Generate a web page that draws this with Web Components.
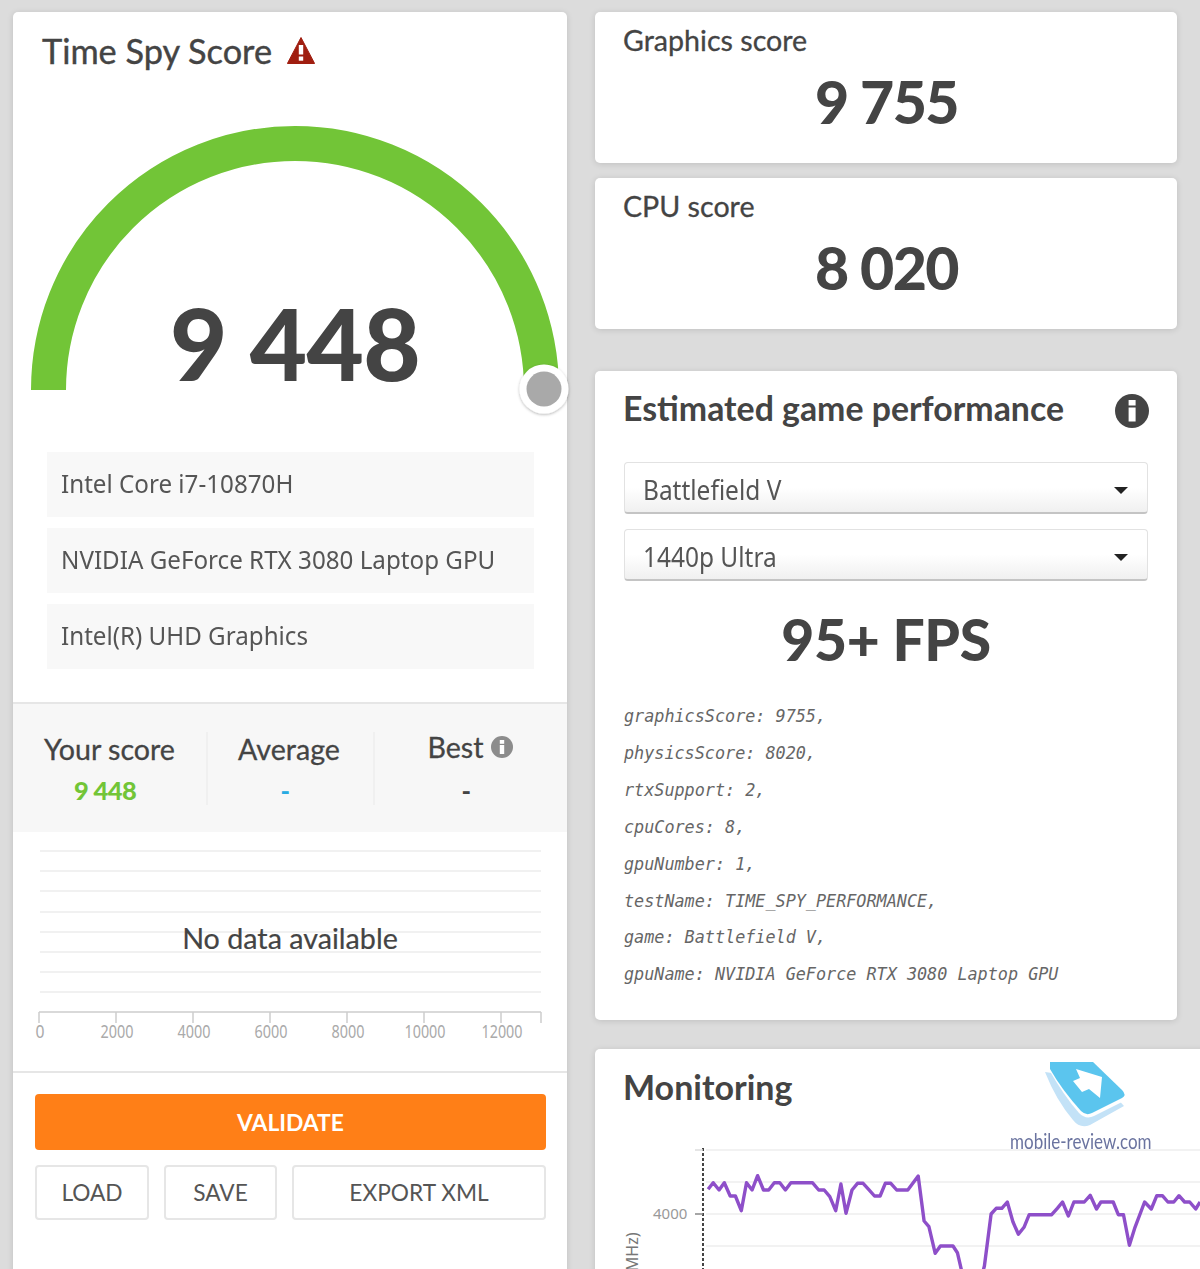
<!DOCTYPE html>
<html lang="en">
<head>
<meta charset="utf-8">
<title>Time Spy Score</title>
<style>
    html, body { margin: 0; height: 1269px; overflow: hidden; }
    body {
        background: #dcdcdc;
        font-family: Lato, "Noto Sans", sans-serif;
        color: #444;
    }
    dash-board { display: grid; }
</style>
</head>
<body>
<dash-board>
    <score-panel slot="left"></score-panel>
    <score-card slot="right" label="Graphics score" value="9 755"></score-card>
    <score-card slot="right" label="CPU score" value="8 020" style="margin-top:15px"></score-card>
    <estimate-card slot="right" style="margin-top:42px"></estimate-card>
    <monitoring-card slot="right" style="margin-top:29px"></monitoring-card>
</dash-board>

<script>
const CARD = `
    background: #fff;
    border-radius: 5px;
    box-shadow: 0 1px 6px rgba(0,0,0,0.13);
`;

class DashBoard extends HTMLElement {
    constructor() {
        super();
        this.attachShadow({ mode: "open" });
        this.shadowRoot.innerHTML = `
            <style>
                :host {
                    display: grid;
                    grid-template-columns: 554px 582px;
                    column-gap: 28px;
                    padding: 12px 0 0 13px;
                }
                .col { display: flex; flex-direction: column; min-width: 0; }
            </style>
            <div class="col"><slot name="left"></slot></div>
            <div class="col"><slot name="right"></slot></div>
        `;
    }
}

class GaugeDial extends HTMLElement {
    constructor() {
        super();
        this.attachShadow({ mode: "open" });
        this.shadowRoot.innerHTML = `
            <style>
                :host { display: block; position: relative; height: 362px; }
                svg { display: block; overflow: visible; }
                .value {
                    position: absolute;
                    left: 157px;
                    top: 193px;
                    font: 900 99px/120px Lato, sans-serif;
                    letter-spacing: -0.6px;
                    color: #444;
                    white-space: nowrap;
                }
            </style>
            <svg width="554" height="362" viewBox="0 0 554 362">
                <defs>
                    <filter id="s" x="-30%" y="-30%" width="160%" height="160%">
                        <feDropShadow dx="0" dy="1" stdDeviation="1.5" flood-color="#000" flood-opacity="0.3"/>
                    </filter>
                </defs>
                <path d="M35.5 300 A246.5 246.5 0 0 1 528.5 300" fill="none" stroke="#72c537" stroke-width="35"/>
                <circle cx="531" cy="299" r="24.5" fill="#fff" filter="url(#s)"/>
                <circle cx="531" cy="299" r="17.5" fill="#a9a9a9"/>
            </svg>
            <div class="value">${this.getAttribute("value")}</div>
        `;
    }
}

class SpecRow extends HTMLElement {
    constructor() {
        super();
        this.attachShadow({ mode: "open" });
        this.shadowRoot.innerHTML = `
            <style>
                :host {
                    display: flex;
                    align-items: center;
                    height: 65px;
                    margin-bottom: 11px;
                    padding: 0 14px 0 13.5px;
                    background: #f8f8f8;
                    font: 400 26px "Noto Sans", sans-serif;
                    color: #555;
                    white-space: nowrap;
                }
                span { display: inline-block; transform-origin: 0 50%; transform: scaleX(0.93); margin-top: -4px; }
            </style>
            <span><slot></slot></span>
        `;
    }
}

class StatCell extends HTMLElement {
    constructor() {
        super();
        this.attachShadow({ mode: "open" });
        this.shadowRoot.innerHTML = `
            <style>
                :host {
                    display: block;
                    height: 73px;
                    margin-left: -1px;
                    text-align: center;
                    border-left: 2px solid #f0f0f0;
                }
                :host([first]) { border-left: 0; margin-left: 0; }
                .label {
                    font: 400 28.6px/34px Lato, sans-serif;
                    -webkit-text-stroke: 0.3px #444;
                    color: #444;
                    height: 34px;
                    white-space: nowrap;
                    transform: translateX(var(--label-nudge, 0));
                }
                .value {
                    font: 900 25.5px/34px Lato, sans-serif;
                    letter-spacing: -0.6px;
                    margin-top: 7px;
                    color: var(--tone, #444);
                    transform: translateX(var(--nudge, 0));
                }
            </style>
            <div class="label"><slot></slot></div>
            <div class="value">${this.getAttribute("value")}</div>
        `;
    }
}

class DistChart extends HTMLElement {
    constructor() {
        super();
        this.attachShadow({ mode: "open" });
        const lines = [19, 39, 59, 80, 100, 120, 140, 160]
            .map(y => `<line x1="27" x2="528" y1="${y}" y2="${y}" stroke="#f1f1f1" stroke-width="2"/>`).join("");
        const ticks = [[26, "0", 9], [103, "2000", 33], [180, "4000", 33], [257, "6000", 33], [334, "8000", 33], [411, "10000", 41], [488, "12000", 41]];
        const marks = ticks.map(([x, t, w]) => `
            <line x1="${x}" x2="${x}" y1="180" y2="191" stroke="#ccc" stroke-width="1.5"/>
            <text x="${x + 1}" y="206" text-anchor="middle" textLength="${w}" lengthAdjust="spacingAndGlyphs">${t}</text>
        `).join("");
        this.shadowRoot.innerHTML = `
            <style>
                :host { display: block; position: relative; height: 239px; border-bottom: 2px solid #e6e6e6; }
                svg { display: block; }
                text { font: 400 18px "Noto Sans", sans-serif; fill: #aaa; }
                .empty {
                    position: absolute;
                    left: 0;
                    right: 0;
                    top: 87px;
                    text-align: center;
                    font: 400 28.7px/38px Lato, sans-serif;
                    -webkit-text-stroke: 0.2px #444;
                    color: #444;
                }
            </style>
            <svg width="554" height="239" viewBox="0 0 554 239">
                ${lines}
                <line x1="26" x2="528" y1="180" y2="180" stroke="#ccc" stroke-width="1.5"/>
                <line x1="528" x2="528" y1="180" y2="191" stroke="#ccc" stroke-width="1.5"/>
                ${marks}
            </svg>
            <div class="empty">No data available</div>
        `;
    }
}

class ActionButton extends HTMLElement {
    constructor() {
        super();
        this.attachShadow({ mode: "open" });
        this.shadowRoot.innerHTML = `
            <style>
                :host {
                    display: flex;
                    align-items: center;
                    justify-content: center;
                    height: 51px;
                    box-sizing: content-box;
                    border: 2px solid #e6e6e6;
                    border-radius: 4px;
                    background: #fff;
                    font: 400 22.7px Lato, sans-serif;
                    color: #555;
                    white-space: nowrap;
                }
                :host([primary]) {
                    height: 56px;
                    border: 0;
                    background: #ff7f17;
                    font-weight: 700;
                    font-size: 22.8px;
                    color: #fff;
                }
            </style>
            <slot></slot>
        `;
    }
}

class ScorePanel extends HTMLElement {
    constructor() {
        super();
        this.attachShadow({ mode: "open" });
        this.shadowRoot.innerHTML = `
            <style>
                :host { display: block; height: 1300px; ${CARD} }
                .head {
                    display: flex;
                    align-items: center;
                    gap: 15px;
                    height: 78px;
                    padding-left: 29px;
                    font: 400 34.3px Lato, sans-serif;
                    -webkit-text-stroke: 0.4px #444;
                    color: #444;
                }
                .head span { margin-top: -2px; }
                .head svg { margin-top: -1px; }
                .specs { padding: 0 33px 22px 34px; }
                .stats {
                    display: grid;
                    grid-template-columns: 194px 167px 193px;
                    height: 100px;
                    padding-top: 28px;
                    background: #f7f7f7;
                    border-top: 2px solid #e6e6e6;
                    box-sizing: content-box;
                }
                .best { display: inline-flex; align-items: center; gap: 7px; position: relative; top: -2px; }
                .actions { padding: 21px 21px 0 22px; }
                .row { display: grid; grid-template-columns: 114px 113px 254px; column-gap: 15px; margin-top: 15px; }
                action-button[primary] { width: 511px; }
            </style>
            <div class="head">
                <span>Time Spy Score</span>
                <svg width="28" height="27" viewBox="0 0 28 27">
                    <path d="M14 0.5 L27.6 26.5 L0.4 26.5 Z" fill="#a01e10" stroke="#a01e10" stroke-linejoin="round"/>
                    <rect x="11.8" y="8" width="4.4" height="9.5" fill="#fff"/>
                    <rect x="11.8" y="19.5" width="4.4" height="4.2" fill="#fff"/>
                </svg>
            </div>
            <gauge-dial value="9 448"></gauge-dial>
            <div class="specs">
                <spec-row>Intel Core i7-10870H</spec-row>
                <spec-row>NVIDIA GeForce RTX 3080 Laptop GPU</spec-row>
                <spec-row>Intel(R) UHD Graphics</spec-row>
            </div>
            <div class="stats">
                <stat-cell first value="9 448" style="--tone:#72c537;--nudge:-5px;--label-nudge:-0.5px">Your score</stat-cell>
                <stat-cell value="-" style="--tone:#29abe2;--nudge:-6px;--label-nudge:-2px">Average</stat-cell>
                <stat-cell value="-" style="--nudge:-5px;--label-nudge:-1px"><span class="best">Best
                    <svg width="22" height="22" viewBox="0 0 22 22">
                        <circle cx="11" cy="11" r="11" fill="#8c8c8c"/>
                        <rect x="8.8" y="9" width="4.4" height="9" fill="#fff"/>
                        <rect x="8.8" y="4" width="4.4" height="3.8" fill="#fff"/>
                    </svg></span></stat-cell>
            </div>
            <dist-chart></dist-chart>
            <div class="actions">
                <action-button primary>VALIDATE</action-button>
                <div class="row">
                    <action-button>LOAD</action-button>
                    <action-button>SAVE</action-button>
                    <action-button>EXPORT XML</action-button>
                </div>
            </div>
        `;
    }
}

class ScoreCard extends HTMLElement {
    constructor() {
        super();
        this.attachShadow({ mode: "open" });
        this.shadowRoot.innerHTML = `
            <style>
                :host { display: block; height: 151px; box-sizing: border-box; padding: 9px 28px 0 29px; ${CARD} }
                .label { font: 400 28.6px/38px Lato, sans-serif; -webkit-text-stroke: 0.3px #444; color: #444; margin-left: -1px; }
                .value { font: 900 59px/72px Lato, sans-serif; letter-spacing: -1.6px; color: #444; text-align: center; margin-top: 7px; }
            </style>
            <div class="label">${this.getAttribute("label")}</div>
            <div class="value">${this.getAttribute("value")}</div>
        `;
    }
}

class GameSelect extends HTMLElement {
    constructor() {
        super();
        this.attachShadow({ mode: "open" });
        this.shadowRoot.innerHTML = `
            <style>
                :host {
                    display: flex;
                    align-items: center;
                    justify-content: space-between;
                    height: 52px;
                    box-sizing: border-box;
                    margin-bottom: 15px;
                    padding: 0 19px 0 18px;
                    border: 1px solid #e2e2e2;
                    border-bottom: 2px solid #c4c4c4;
                    border-radius: 4px;
                    background: linear-gradient(#fff 50%, #f0f0f0);
                    font: 400 27px "Noto Sans", sans-serif;
                    color: #555;
                }
                span { display: inline-block; transform-origin: 0 50%; transform: scaleX(0.906); margin-top: 3px; }
                i { width: 0; height: 0; margin-top: 6px; border: 7px solid transparent; border-top-color: #222; border-bottom: 0; }
            </style>
            <span><slot></slot></span><i></i>
        `;
    }
}

class EstimateCard extends HTMLElement {
    constructor() {
        super();
        this.attachShadow({ mode: "open" });
        const params = [
            "graphicsScore: 9755,",
            "physicsScore: 8020,",
            "rtxSupport: 2,",
            "cpuCores: 8,",
            "gpuNumber: 1,",
            "testName: TIME_SPY_PERFORMANCE,",
            "game: Battlefield V,",
            "gpuName: NVIDIA GeForce RTX 3080 Laptop GPU"
        ].map(p => `<div>${p}</div>`).join("");
        this.shadowRoot.innerHTML = `
            <style>
                :host { display: block; height: 649px; box-sizing: border-box; padding: 0 29px; ${CARD} }
                .head {
                    display: flex;
                    align-items: center;
                    justify-content: space-between;
                    height: 80px;
                    margin-bottom: 11px;
                    font: 700 33.85px Lato, sans-serif;
                    color: #444;
                    white-space: nowrap;
                }
                .head span { margin-top: -6px; margin-left: -1px; }
                .head svg { margin: -1px -1px 0 0; }
                .fps { font: 900 57px/70px Lato, sans-serif; letter-spacing: -0.4px; color: #444; text-align: center; margin-top: 23px; }
                .params {
                    margin-top: 24px;
                    font: italic 400 16.8px/36.9px "DejaVu Sans Mono", monospace;
                    color: #666;
                    white-space: nowrap;
                }
            </style>
            <div class="head">
                <span>Estimated game performance</span>
                <svg width="34" height="34" viewBox="0 0 34 34">
                    <circle cx="17" cy="17" r="17" fill="#444"/>
                    <rect x="13.6" y="13.5" width="7" height="14" fill="#fff"/>
                    <rect x="13.6" y="6" width="7" height="5.5" fill="#fff"/>
                </svg>
            </div>
            <game-select>Battlefield V</game-select>
            <game-select>1440p Ultra</game-select>
            <div class="fps">95+ FPS</div>
            <div class="params">${params}</div>
        `;
    }
}

class ClockChart extends HTMLElement {
    constructor() {
        super();
        this.attachShadow({ mode: "open" });
        // points read off the reference, in a 2.7x / 3x zoomed frame
        const raw = "238,148 252,128 268,150 282,128 298,168 312,168 328,212 342,128 357,150 372,107 388,150 402,150 417,128 432,128 447,150 462,128 520,128 537,150 552,150 567,170 583,212 597,132 611,220 627,150 642,130 657,130 672,148 688,168 703,168 717,130 732,130 748,150 778,150 806,108 822,243 835,260 852,340 866,318 900,318 912,338 925,400 935,420 975,420 985,378 1003,222 1017,205 1032,205 1047,186 1062,245 1077,283 1092,262 1106,224 1167,224 1182,205 1196,186 1212,228 1227,186 1255,186 1271,166 1288,207 1300,186 1333,186 1347,224 1361,224 1377,316 1392,262 1418,186 1436,207 1451,167 1466,167 1481,186 1497,186 1511,167 1526,186 1540,186 1556,207 1568,186";
        const pts = raw.split(" ").map(p => {
            const [x, y] = p.split(",").map(Number);
            return `${(620 + x / 2.703 - 595).toFixed(1)},${(y / 3).toFixed(1)}`;
        }).join(" ");
        const grid = [10, 42, 74, 106]
            .map(y => `<line x1="111" x2="610" y1="${y}" y2="${y}" stroke="#f2f2f2" stroke-width="2"/>`).join("");
        this.shadowRoot.innerHTML = `
            <style>
                :host { display: block; height: 140px; }
                svg { display: block; }
                text { font: 400 15px "Noto Sans", sans-serif; fill: #999; }
                .axis { font-size: 16px; fill: #777; }
            </style>
            <svg width="605" height="140" viewBox="0 0 605 140">
                ${grid}
                <line x1="108" x2="108" y1="8" y2="140" stroke="#444" stroke-width="2" stroke-dasharray="3 2"/>
                <line x1="100" x2="108" y1="10" y2="10" stroke="#ddd" stroke-width="1.5"/>
                <line x1="100" x2="108" y1="74" y2="74" stroke="#888" stroke-width="1.5"/>
                <text x="58" y="79">4000</text>
                <text class="axis" transform="translate(43 136) rotate(-90)">(MHz)</text>
                <polyline points="${pts}" fill="none" stroke="#8e4fc9" stroke-width="3.4" stroke-linejoin="round"/>
            </svg>
        `;
    }
}

class MobileReviewMark extends HTMLElement {
    constructor() {
        super();
        this.attachShadow({ mode: "open" });
        this.shadowRoot.innerHTML = `
            <style>
                :host { display: block; position: absolute; left: 410px; top: 11px; width: 150px; height: 95px; }
                svg { position: absolute; left: 35px; top: 0; }
                .name {
                    position: absolute;
                    left: 5px;
                    top: 68px;
                    font: 400 21px/26px Lato, sans-serif;
                    color: #6a739f;
                    white-space: nowrap;
                    transform-origin: 0 50%;
                    transform: scaleX(0.81);
                }
            </style>
            <svg width="90" height="70" viewBox="0 0 90 70">
                <path d="M5 12 Q16 40 33 60 Q40 69 50 65 L84 46 L60 20 Z" fill="#c3e2f7"/>
                <path d="M8 8 Q24 36 39 53 Q46 60 54 56 L86 40 L52 2 L8 2 Z" fill="#fff"/>
                <path d="M10 2 L53 2 L82 30 Q87 35 82 38 L52 53 Q46 56 41 51 Q22 30 10 9 Z" fill="#5bc5ee"/>
                <path d="M36 9 L62 17 L60 38 L49 29 L42 32 L33 21 L40 18 Z" fill="#fff"/>
            </svg>
            <div class="name">mobile-review.com</div>
        `;
    }
}

class MonitoringCard extends HTMLElement {
    constructor() {
        super();
        this.attachShadow({ mode: "open" });
        this.shadowRoot.innerHTML = `
            <style>
                :host { display: block; position: relative; width: 640px; height: 300px; ${CARD} }
                h2 {
                    margin: 0;
                    padding: 15px 0 0 28px;
                    height: 84px;
                    box-sizing: border-box;
                    font: 700 34px/46px Lato, sans-serif;
                    color: #444;
                }
                clock-chart { margin-top: 7px; }
            </style>
            <h2>Monitoring</h2>
            <clock-chart></clock-chart>
            <mobile-review-mark></mobile-review-mark>
        `;
    }
}

customElements.define("gauge-dial", GaugeDial);
customElements.define("spec-row", SpecRow);
customElements.define("stat-cell", StatCell);
customElements.define("dist-chart", DistChart);
customElements.define("action-button", ActionButton);
customElements.define("score-panel", ScorePanel);
customElements.define("score-card", ScoreCard);
customElements.define("game-select", GameSelect);
customElements.define("estimate-card", EstimateCard);
customElements.define("clock-chart", ClockChart);
customElements.define("mobile-review-mark", MobileReviewMark);
customElements.define("monitoring-card", MonitoringCard);
customElements.define("dash-board", DashBoard);
</script>
</body>
</html>
